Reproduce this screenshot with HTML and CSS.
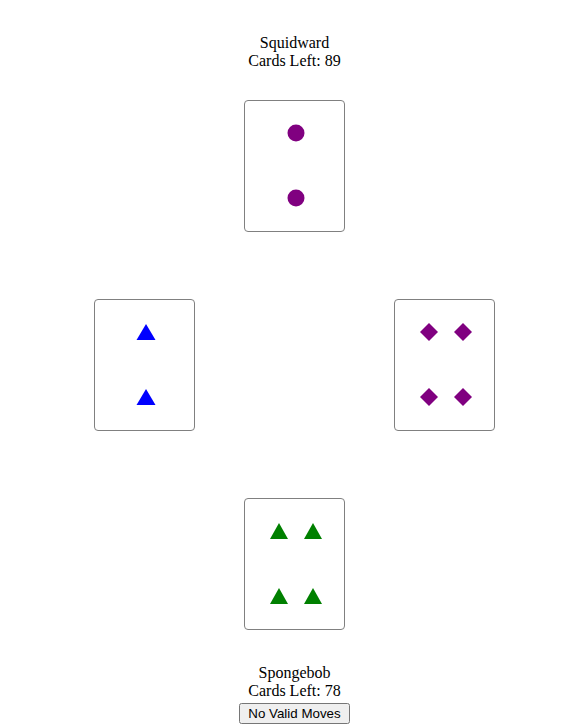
FILE: index.html
```html
<!DOCTYPE html>
<html lang="en">
<head>
    <meta charset="UTF-8">
    <meta name="viewport" content="width=device-width, initial-scale=1.0">
    <title>Card Game</title>
    <link rel="stylesheet" href="styles.css">
</head>
<body>

<div class="board">

    <div class="player player-top">
        <div>Squidward</div>
        <div>Cards Left: 89</div>
    </div>

    <!-- top: 2 purple circles -->
    <div class="card card-top">
        <svg class="symbol" viewBox="0 0 20 20"><circle cx="10" cy="10" r="8.5" fill="#800080"/></svg>
        <svg class="symbol" viewBox="0 0 20 20"><circle cx="10" cy="10" r="8.5" fill="#800080"/></svg>
    </div>

    <!-- left: 2 blue triangles -->
    <div class="card card-left">
        <svg class="symbol" viewBox="0 0 20 20"><polygon points="0.5,18 10,2 19.5,18" fill="#0000ff"/></svg>
        <svg class="symbol" viewBox="0 0 20 20"><polygon points="0.5,18 10,2 19.5,18" fill="#0000ff"/></svg>
    </div>

    <!-- right: 4 purple diamonds -->
    <div class="card card-right double">
        <svg class="symbol" viewBox="0 0 20 20"><polygon points="10,1 19,10 10,19 1,10" fill="#800080"/></svg>
        <svg class="symbol" viewBox="0 0 20 20"><polygon points="10,1 19,10 10,19 1,10" fill="#800080"/></svg>
        <svg class="symbol" viewBox="0 0 20 20"><polygon points="10,1 19,10 10,19 1,10" fill="#800080"/></svg>
        <svg class="symbol" viewBox="0 0 20 20"><polygon points="10,1 19,10 10,19 1,10" fill="#800080"/></svg>
    </div>

    <!-- bottom: 4 green triangles -->
    <div class="card card-bottom double">
        <svg class="symbol" viewBox="0 0 20 20"><polygon points="1,18 10,2 19,18" fill="#008000"/></svg>
        <svg class="symbol" viewBox="0 0 20 20"><polygon points="1,18 10,2 19,18" fill="#008000"/></svg>
        <svg class="symbol" viewBox="0 0 20 20"><polygon points="1,18 10,2 19,18" fill="#008000"/></svg>
        <svg class="symbol" viewBox="0 0 20 20"><polygon points="1,18 10,2 19,18" fill="#008000"/></svg>
    </div>

    <div class="player player-bottom">
        <div>Spongebob</div>
        <div>Cards Left: 78</div>
        <button>No Valid Moves</button>
    </div>

</div>

</body>
</html>
```

FILE: styles.css
```css
body {
    font-family: "Liberation Serif", "Times New Roman", serif;
    font-size: 16px;
    margin: 8px;
    color: #000;
    background-color: #fff;
}
.board {
    width: 573px;
    padding-top: 26px;
    display: grid;
    grid-template-columns: repeat(3, 101px);
    column-gap: 49px;
    justify-content: center;
}
.player {
    grid-column: 1 / 4;
    text-align: center;
}
.player-top {
    grid-row: 1;
}
.player-bottom {
    grid-row: 5;
    margin-top: 34px;
}
button {
    font-family: "Liberation Sans", Arial, sans-serif;
    font-size: 13.333px;
    padding: 1px 7px;
    margin-top: 3px;
}
.card {
    box-sizing: border-box;
    width: 101px;
    height: 132px;
    border: 1px solid #808080;
    border-radius: 4px;
    background-color: #fff;
    padding: 22px 0 0 3px;
    display: grid;
    grid-template-columns: 20px;
    grid-template-rows: 20px 20px;
    row-gap: 45px;
    justify-content: center;
}
.card.double {
    grid-template-columns: 20px 20px;
    column-gap: 14px;
}
.card-top {
    grid-column: 2;
    grid-row: 2;
    margin-top: 30px;
}
.card-left {
    grid-column: 1;
    grid-row: 3;
    margin-top: 67px;
}
.card-right {
    grid-column: 3;
    grid-row: 3;
    margin-top: 67px;
}
.card-bottom {
    grid-column: 2;
    grid-row: 4;
    margin-top: 67px;
}
.symbol {
    width: 20px;
    height: 20px;
    display: block;
}
```
